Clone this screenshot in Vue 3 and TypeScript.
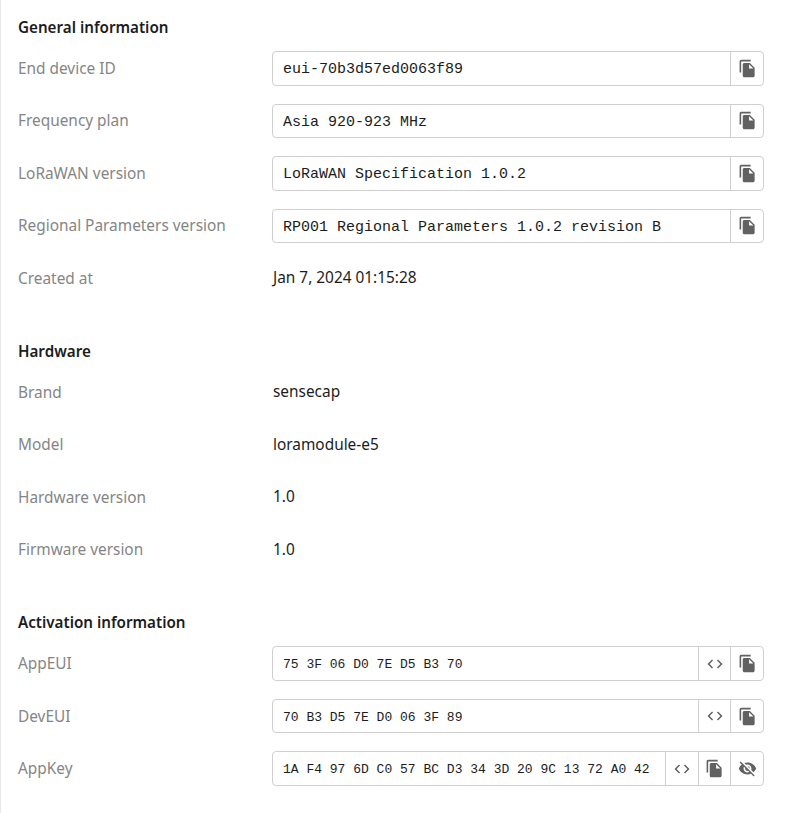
<script setup lang="ts">
type Row = {
  label: string
  value: string
  kind: 'text' | 'mono' | 'hex'
  secret?: boolean
}

type Section = {
  title: string
  rows: Row[]
}

const sections: Section[] = [
  {
    title: 'General information',
    rows: [
      { label: 'End device ID', value: 'eui-70b3d57ed0063f89', kind: 'mono' },
      { label: 'Frequency plan', value: 'Asia 920-923 MHz', kind: 'mono' },
      { label: 'LoRaWAN version', value: 'LoRaWAN Specification 1.0.2', kind: 'mono' },
      { label: 'Regional Parameters version', value: 'RP001 Regional Parameters 1.0.2 revision B', kind: 'mono' },
      { label: 'Created at', value: 'Jan 7, 2024 01:15:28', kind: 'text' },
    ],
  },
  {
    title: 'Hardware',
    rows: [
      { label: 'Brand', value: 'sensecap', kind: 'text' },
      { label: 'Model', value: 'loramodule-e5', kind: 'text' },
      { label: 'Hardware version', value: '1.0', kind: 'text' },
      { label: 'Firmware version', value: '1.0', kind: 'text' },
    ],
  },
  {
    title: 'Activation information',
    rows: [
      { label: 'AppEUI', value: '75 3F 06 D0 7E D5 B3 70', kind: 'hex' },
      { label: 'DevEUI', value: '70 B3 D5 7E D0 06 3F 89', kind: 'hex' },
      { label: 'AppKey', value: '1A F4 97 6D C0 57 BC D3 34 3D 20 9C 13 72 A0 42', kind: 'hex', secret: true },
    ],
  },
]
</script>

<template>
  <div class="panel">
    <section v-for="section in sections" :key="section.title" class="section">
      <h3 class="title">{{ section.title }}</h3>
      <div class="rows">
        <div v-for="row in section.rows" :key="row.label" class="row">
          <span class="label">{{ row.label }}</span>
          <span v-if="row.kind === 'text'" class="text">{{ row.value }}</span>
          <div v-else class="field">
            <span class="value" :class="{ hex: row.kind === 'hex' }">{{ row.value }}</span>
            <button v-if="row.kind === 'hex'" class="btn" type="button">
              <svg class="icon" viewBox="0 0 24 24" width="18" height="18">
                <path d="M9.4 16.6L4.8 12l4.6-4.6L8 6l-6 6 6 6 1.4-1.4zm5.2 0l4.6-4.6-4.6-4.6L16 6l6 6-6 6-1.4-1.4z" />
              </svg>
            </button>
            <button class="btn" type="button">
              <svg class="icon" viewBox="0 0 24 24" width="19" height="19">
                <path d="M16 1H4c-1.1 0-2 .9-2 2v14h2V3h12V1zm-1 4l6 6v10c0 1.1-.9 2-2 2H7.99C6.89 23 6 22.1 6 21l.01-14c0-1.1.89-2 1.99-2h7zm-1 7h5.5L14 6.5V12z" />
              </svg>
            </button>
            <button v-if="row.secret" class="btn" type="button">
              <svg class="icon" viewBox="0 0 24 24" width="19" height="19">
                <path d="M12 7c2.76 0 5 2.24 5 5 0 .65-.13 1.26-.36 1.83l2.92 2.92c1.51-1.26 2.7-2.89 3.43-4.75-1.73-4.39-6-7.5-11-7.5-1.4 0-2.74.25-3.98.7l2.16 2.16C10.74 7.13 11.35 7 12 7zM2 4.27l2.28 2.28.46.46C3.08 8.3 1.78 10.02 1 12c1.73 4.39 6 7.5 11 7.5 1.55 0 3.03-.3 4.38-.84l.42.42L19.73 22 21 20.73 3.27 3 2 4.27zM7.53 9.8l1.55 1.55c-.05.21-.08.43-.08.65 0 1.66 1.34 3 3 3 .22 0 .44-.03.65-.08l1.55 1.55c-.67.33-1.41.53-2.2.53-2.76 0-5-2.24-5-5 0-.79.2-1.53.53-2.2zm4.31-.78l3.15 3.15.02-.16c0-1.66-1.34-3-3-3l-.17.01z" />
              </svg>
            </button>
          </div>
        </div>
      </div>
    </section>
  </div>
</template>

<style>
html,
body {
  background: #fff;
}
</style>

<style scoped>
.panel {
  box-sizing: border-box;
  width: 792px;
  height: 813px;
  overflow: hidden;
  padding: 15px 28px 0 17px;
  border-left: 1px solid #e8e8e8;
  font-family: "Noto Sans", sans-serif;
  font-size: 15.4px;
  color: #1c1c1c;
  display: flex;
  flex-direction: column;
  gap: 43.4px;
}

.title {
  margin: 0 0 12px;
  font-size: 15.2px;
  line-height: 24px;
  font-weight: 600;
}

.rows {
  display: flex;
  flex-direction: column;
  gap: 18px;
}

.row {
  display: grid;
  grid-template-columns: 254px 1fr;
  align-items: center;
  height: 34.5px;
}

.label {
  color: #858585;
}

.text {
  padding-left: 1px;
  line-height: 24px;
}

.field {
  box-sizing: border-box;
  height: 34.5px;
  display: flex;
  border: 1px solid #cfcfcf;
  border-radius: 4px;
}

.value {
  flex: 1;
  min-width: 0;
  padding-left: 10px;
  font-family: "Liberation Mono", monospace;
  font-size: 15px;
  line-height: 36px;
  white-space: nowrap;
}

.value.hex {
  font-size: 13px;
}

.btn {
  flex: none;
  width: 32.67px;
  padding: 0;
  display: flex;
  align-items: center;
  justify-content: center;
  background: none;
  border: 0;
  border-left: 1px solid #cfcfcf;
}

.icon {
  fill: #616161;
}
</style>
